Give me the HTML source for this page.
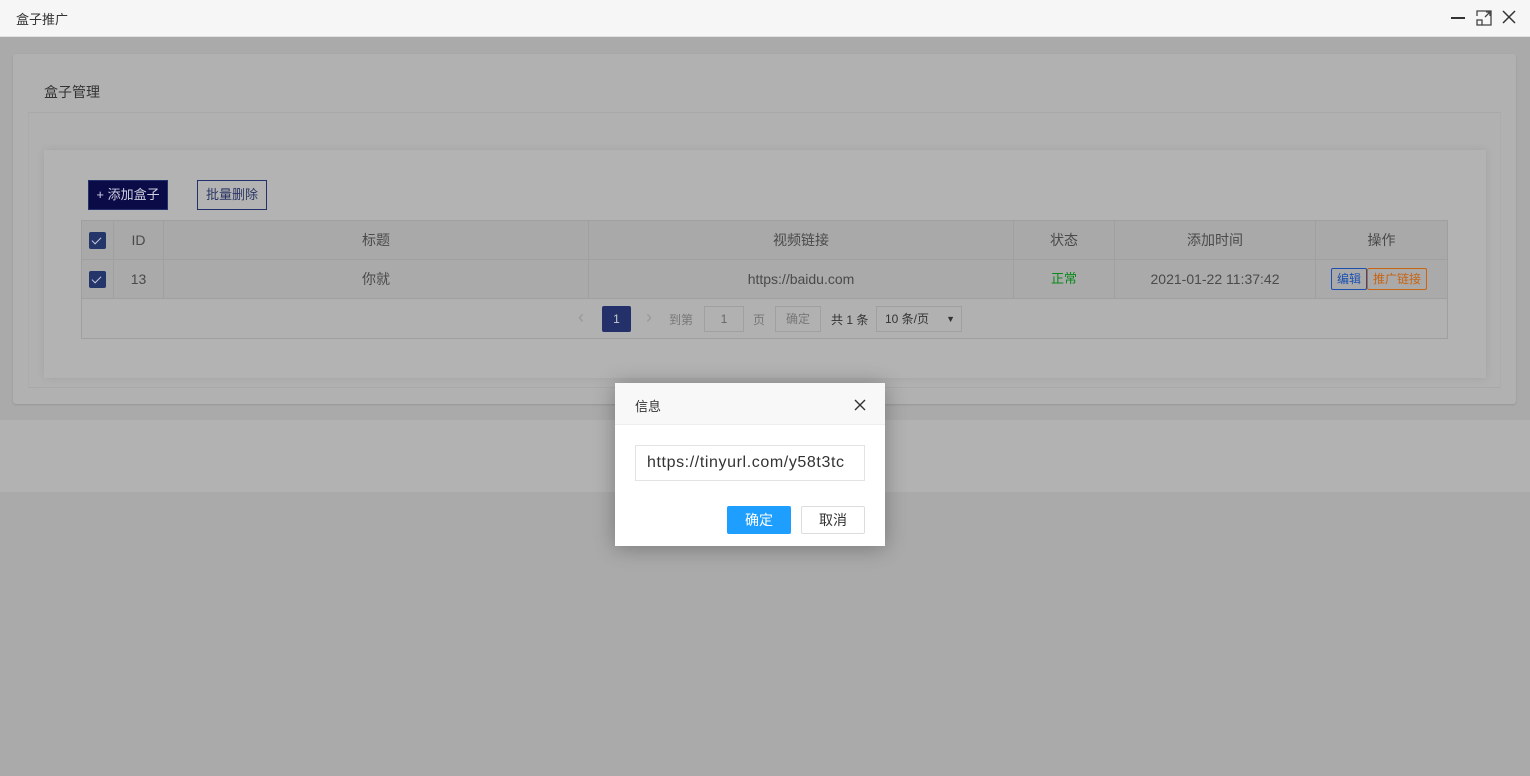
<!DOCTYPE html>
<html><head><meta charset="utf-8"><style>
*{margin:0;padding:0;box-sizing:border-box}
body{width:1530px;height:776px;background:#aaaaaa;font-family:"Liberation Sans","Noto Sans CJK SC",sans-serif;position:relative;overflow:hidden;color:#333}
.a{position:absolute}
.tb{left:0;top:0;width:1530px;height:37px;background:#f6f6f6;border-bottom:1px solid #e2e2e2}
.card{left:13px;top:54px;width:1503px;height:350px;background:#b1b1b1;border-radius:3px;box-shadow:0 1px 2px rgba(0,0,0,.12)}
.inner{left:44px;top:150px;width:1442px;height:228px;background:#b3b3b3;box-shadow:0 0 8px rgba(0,0,0,.08)}
.tbl{left:81px;top:220px;width:1367px;height:119px;border:1px solid #9f9f9f;background:#b1b1b1}
.row{position:absolute;left:0;width:1365px;height:39px;border-bottom:1px solid #a0a0a0;background:#aaaaaa;font-size:14px;color:#4a4a4a}
.c{position:absolute;top:0;height:38px;line-height:38px;text-align:center;border-right:1px solid #a0a0a0}
.cb{position:absolute;left:7px;top:11px;width:17px;height:17px;background:#24356a;border-radius:2px}
.cb:after{content:"";position:absolute;left:5px;top:3px;width:4px;height:8px;border:solid #c8cbd8;border-width:0 1px 1px 0;transform:rotate(45deg)}
.btn{font-size:13px;text-align:center;line-height:28px;height:30px}
.dlg{left:615px;top:383px;width:270px;height:163px;background:#fff;box-shadow:0 2px 20px rgba(0,0,0,.3)}
</style></head><body>
<div class="a tb"><div class="a" style="left:16px;top:9px;font-size:13px;color:#333">盒子推广</div>
<div class="a" style="left:1451px;top:17px;width:14px;height:2px;background:#333"></div>
<svg class="a" style="left:1476px;top:10px" width="16" height="16" viewBox="0 0 16 16" fill="none" stroke="#444" stroke-width="1.3"><path d="M1 6V1h14v14H6"/><rect x="1" y="10" width="5" height="5"/><path d="M9 7l5-5M10 2h4v4"/></svg>
<svg class="a" style="left:1502px;top:10px" width="14" height="14" viewBox="0 0 14 14" stroke="#333" stroke-width="1.5"><path d="M1 1l12 12M13 1L1 13"/></svg>
</div>
<div class="a card"></div>
<div class="a" style="left:44px;top:82px;font-size:14px;color:#333">盒子管理</div>
<div class="a" style="left:28px;top:112px;width:1473px;height:276px;border-top:1px solid #a9a9a9;border-bottom:1px solid #a9a9a9;border-left:1px solid #acacac;border-right:1px solid #acacac"></div>
<div class="a inner"></div>
<div class="a btn" style="left:88px;top:180px;width:80px;background:#0b0b48;border:1px solid #23306a;color:#d0d0e0">+ 添加盒子</div>
<div class="a btn" style="left:197px;top:180px;width:70px;border:1px solid #23306a;color:#2a3564">批量删除</div>
<div class="a tbl">
 <div class="row" style="top:0;background:#a9a9a9">
  <div class="c" style="left:0;width:32px"><div class="cb"></div></div>
  <div class="c" style="left:32px;width:50px">ID</div>
  <div class="c" style="left:82px;width:425px">标题</div>
  <div class="c" style="left:507px;width:425px">视频链接</div>
  <div class="c" style="left:932px;width:101px">状态</div>
  <div class="c" style="left:1033px;width:201px">添加时间</div>
  <div class="c" style="left:1234px;width:131px;border:0">操作</div>
 </div>
 <div class="row" style="top:39px">
  <div class="c" style="left:0;width:32px"><div class="cb"></div></div>
  <div class="c" style="left:32px;width:50px">13</div>
  <div class="c" style="left:82px;width:425px">你就</div>
  <div class="c" style="left:507px;width:425px">https://baidu.com</div>
  <div class="c" style="left:932px;width:101px;color:#0a8a1c;font-size:13px">正常</div>
  <div class="c" style="left:1033px;width:201px">2021-01-22 11:37:42</div>
  <div class="c" style="left:1234px;width:131px;border:0">
   <span class="a" style="left:15px;top:8px;width:36px;height:22px;line-height:20px;border:1px solid #1c50b0;color:#1c50b0;font-size:12px;border-radius:2px">编辑</span>
   <span class="a" style="left:51px;top:8px;width:60px;height:22px;line-height:20px;border:1px solid #c86412;color:#c86412;font-size:12px;border-radius:2px">推广链接</span>
  </div>
 </div>
 <div class="a" style="left:496px;top:86px;font-size:18px;color:#999">‹</div>
 <div class="a" style="left:520px;top:85px;width:29px;height:26px;background:#23306a;color:#ccc;font-size:12px;text-align:center;line-height:26px;border-radius:2px">1</div>
 <div class="a" style="left:564px;top:86px;font-size:18px;color:#999">›</div>
 <div class="a" style="left:587px;top:90px;font-size:12px;color:#777">到第</div>
 <div class="a" style="left:622px;top:85px;width:40px;height:26px;border:1px solid #a0a0a0;font-size:12px;color:#666;text-align:center;line-height:24px">1</div>
 <div class="a" style="left:671px;top:90px;font-size:12px;color:#777">页</div>
 <div class="a" style="left:693px;top:85px;width:46px;height:26px;border:1px solid #a0a0a0;font-size:12px;color:#777;text-align:center;line-height:24px">确定</div>
 <div class="a" style="left:749px;top:90px;font-size:12px;color:#333">共 1 条</div>
 <div class="a" style="left:794px;top:85px;width:86px;height:26px;border:1px solid #a0a0a0;font-size:12px;color:#333;line-height:24px;padding-left:8px">10 条/页<span style="position:absolute;right:6px;font-size:9px">▼</span></div>
</div>
<div class="a" style="left:0;top:420px;width:1530px;height:72px;background:#b2b2b2"></div>
<div class="a dlg">
 <div class="a" style="left:0;top:0;width:270px;height:42px;background:#f8f8f8;border-bottom:1px solid #eee"></div>
 <div class="a" style="left:20px;top:13px;font-size:13px;color:#333">信息</div>
 <svg class="a" style="left:239px;top:16px" width="12" height="12" viewBox="0 0 12 12" stroke="#333" stroke-width="1.4"><path d="M1 1l10 10M11 1L1 11"/></svg>
 <div class="a" style="left:20px;top:62px;width:230px;height:36px;border:1px solid #e3e3e3;overflow:hidden;white-space:nowrap;font-size:16px;line-height:34px;padding-left:11px;color:#333;letter-spacing:0.6px">https://tinyurl.com/y58t3tc</div>
 <div class="a" style="left:112px;top:123px;width:64px;height:28px;background:#1e9fff;color:#fff;font-size:14px;text-align:center;line-height:28px;border-radius:2px">确定</div>
 <div class="a" style="left:186px;top:123px;width:64px;height:28px;border:1px solid #ddd;color:#333;font-size:14px;text-align:center;line-height:26px;border-radius:2px">取消</div>
</div>
</body></html>
